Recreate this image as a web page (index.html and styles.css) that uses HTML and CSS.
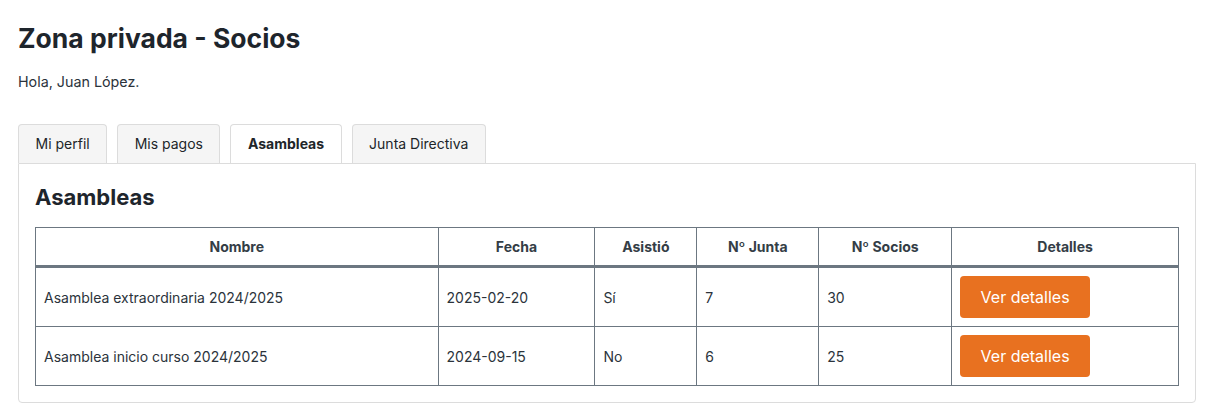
FILE: index.html
```html
<!DOCTYPE html>
<html lang="es">
<head>
<meta charset="utf-8">
<title>Zona privada - Socios</title>
<link rel="stylesheet" href="styles.css">
</head>
<body>
<main class="page">
  <h1 class="title">Zona privada - Socios</h1>
  <p class="greeting">Hola, Juan López.</p>
  <nav class="tabs">
    <button class="tab">Mi perfil</button>
    <button class="tab">Mis pagos</button>
    <button class="tab active">Asambleas</button>
    <button class="tab">Junta Directiva</button>
  </nav>
  <section class="panel">
    <h2 class="panel-title">Asambleas</h2>
    <table class="grid">
      <colgroup>
        <col class="c1"><col class="c2"><col class="c3"><col class="c4"><col class="c5"><col class="c6">
      </colgroup>
      <thead>
        <tr><th>Nombre</th><th>Fecha</th><th>Asistió</th><th>Nº Junta</th><th>Nº Socios</th><th>Detalles</th></tr>
      </thead>
      <tbody>
        <tr>
          <td>Asamblea extraordinaria 2024/2025</td><td>2025-02-20</td><td>Sí</td><td>7</td><td>30</td>
          <td><button class="btn">Ver detalles</button></td>
        </tr>
        <tr>
          <td>Asamblea inicio curso 2024/2025</td><td>2024-09-15</td><td>No</td><td>6</td><td>25</td>
          <td><button class="btn">Ver detalles</button></td>
        </tr>
      </tbody>
    </table>
  </section>
</main>
</body>
</html>
```
FILE: styles.css
```css
* { box-sizing: border-box; }
html, body { margin: 0; padding: 0; background: #fff; }
body {
  font-family: Inter, "Helvetica Neue", "Liberation Sans", sans-serif;
  font-size: 14px;
  line-height: 1.5;
  color: #212529;
}
.page { padding: 18px 18px 16px 18px; }
.title {
  margin: 0;
  font-size: 26.5px;
  font-weight: 700;
  line-height: 40px;
  color: #1e252c;
}
.greeting { margin: 13px 0 0; font-size: 14.3px; line-height: 21px; color: #2b333b; }
.tabs { display: flex; gap: 10px; margin-top: 32px; }
.tab {
  font: inherit;
  font-size: 14px;
  line-height: 21px;
  color: #212529;
  background: #f5f5f5;
  border: 1px solid #dcdcdc;
  border-bottom: 0;
  border-radius: 4px 4px 0 0;
  padding: 8px 16.5px 9px;
  cursor: pointer;
}
.tab.active { background: #fff; font-weight: 700; }
.panel {
  border: 1px solid #dcdcdc;
  border-radius: 0 0 4px 4px;
  padding: 16px 16px 16px 16px;
}
.panel-title {
  margin: 0 0 13px;
  font-size: 22px;
  line-height: 34px;
  font-weight: 700;
  color: #1e252c;
}
.grid {
  width: 100%;
  border-collapse: collapse;
  border: 1px solid #6c7781;
}
.c1 { width: 403px; } .c2 { width: 157px; } .c3 { width: 102px; }
.c4 { width: 122px; } .c5 { width: 133px; } .c6 { width: 227px; }
.grid th, .grid td { border: 1px solid #6c7781; padding: 8px; text-align: left; vertical-align: middle; }
.grid th {
  text-align: center;
  font-weight: 700;
  color: #343d46;
  border-bottom: 3px solid #6c7781;
}
.grid td { color: #2b333b; height: 59px; }
.btn {
  font: inherit;
  font-size: 16px;
  line-height: 24px;
  color: #fff;
  background: #e87120;
  border: 0;
  border-radius: 4px;
  padding: 9px 18px;
  width: 130px;
  cursor: pointer;
}
```
